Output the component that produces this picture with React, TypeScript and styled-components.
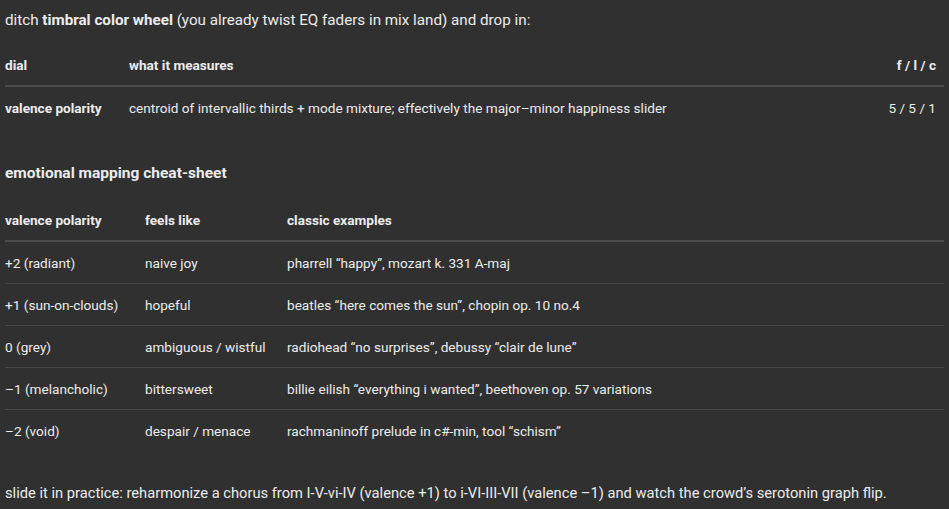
import React from 'react';
import styled, { createGlobalStyle } from 'styled-components';

const GlobalStyle = createGlobalStyle`
  html, body {
    margin: 0;
    padding: 0;
    background: #303030;
  }
  body {
    font-family: Roboto, Inter, "Liberation Sans", sans-serif;
    color: #ececec;
    font-size: 13.6px;
    -webkit-font-smoothing: antialiased;
  }
`;

const Page = styled.div`
  width: 949px;
  height: 509px;
  overflow: hidden;
  padding: 10px 0 0 5px;
  box-sizing: border-box;
`;

const Para = styled.p<{ $top?: number; $size: number }>`
  margin: ${({ $top }) => $top ?? 0}px 0 0;
  font-size: ${({ $size }) => $size}px;
  line-height: 20px;
  white-space: nowrap;

  strong {
    font-weight: 700;
  }
`;

const Heading = styled.h3`
  margin: 34px 0 0;
  font-size: 15.5px;
  line-height: 22px;
  font-weight: 700;
`;

const Table = styled.table<{ $top: number }>`
  margin-top: ${({ $top }) => $top}px;
  width: 939px;
  border-collapse: collapse;
  table-layout: fixed;
`;

const Head = styled.th<{ $w?: number; $right?: boolean }>`
  width: ${({ $w }) => ($w ? `${$w}px` : 'auto')};
  text-align: ${({ $right }) => ($right ? 'right' : 'left')};
  font-weight: 700;
  height: 40px;
  padding: 0 ${({ $right }) => ($right ? 8 : 0)}px 0 0;
  border-bottom: 2px solid #4b4b4b;
  white-space: nowrap;
`;

const Row = styled.tr`
  & + & td {
    border-top: 1px solid #464646;
  }
`;

const Cell = styled.td<{ $right?: boolean }>`
  height: 41px;
  padding: 0 ${({ $right }) => ($right ? 8 : 0)}px 0 0;
  text-align: ${({ $right }) => ($right ? 'right' : 'left')};
  white-space: nowrap;
`;

const RowHead = styled(Cell)`
  font-weight: 700;
`;

const mapping = [
  ['+2 (radiant)', 'naive joy', 'pharrell \u201chappy\u201d, mozart k. 331 A-maj'],
  ['+1 (sun-on-clouds)', 'hopeful', 'beatles \u201chere comes the sun\u201d, chopin op. 10 no.4'],
  ['0 (grey)', 'ambiguous / wistful', 'radiohead \u201cno surprises\u201d, debussy \u201cclair de lune\u201d'],
  ['\u20131 (melancholic)', 'bittersweet', 'billie eilish \u201ceverything i wanted\u201d, beethoven op. 57 variations'],
  ['\u20132 (void)', 'despair / menace', 'rachmaninoff prelude in c#-min, tool \u201cschism\u201d'],
];

const App: React.FC = () => {
  return (
    <Page>
      <GlobalStyle />
      <Para $size={15.2}>
        ditch <strong>timbral color wheel</strong> (you already twist EQ faders in mix land) and drop in:
      </Para>

      <Table $top={15}>
        <thead>
          <tr>
            <Head $w={124}>dial</Head>
            <Head>what it measures</Head>
            <Head $w={80} $right>f / l / c</Head>
          </tr>
        </thead>
        <tbody>
          <Row>
            <RowHead>valence polarity</RowHead>
            <Cell>centroid of intervallic thirds + mode mixture; effectively the major–minor happiness slider</Cell>
            <Cell $right>5 / 5 / 1</Cell>
          </Row>
        </tbody>
      </Table>

      <Heading>emotional mapping cheat-sheet</Heading>

      <Table $top={16}>
        <thead>
          <tr>
            <Head $w={140}>valence polarity</Head>
            <Head $w={142}>feels like</Head>
            <Head>classic examples</Head>
          </tr>
        </thead>
        <tbody>
          {mapping.map(([v, f, ex]) => (
            <Row key={v}>
              <Cell>{v}</Cell>
              <Cell>{f}</Cell>
              <Cell>{ex}</Cell>
            </Row>
          ))}
        </tbody>
      </Table>

      <Para $top={32} $size={14.7}>
        slide it in practice: reharmonize a chorus from I-V-vi-IV (valence +1) to i-VI-III-VII (valence –1) and watch the crowd’s serotonin graph flip.
      </Para>
    </Page>
  );
};

export default App;
